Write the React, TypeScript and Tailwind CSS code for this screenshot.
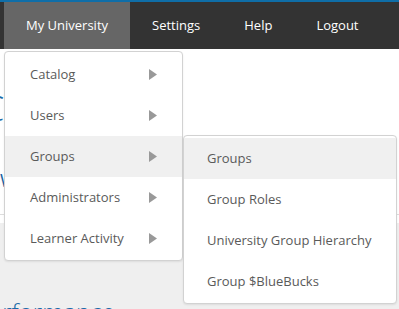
import React from 'react';

const mainItems = ['Catalog', 'Users', 'Groups', 'Administrators', 'Learner Activity'];
const groupItems = ['Groups', 'Group Roles', 'University Group Hierarchy', 'Group $BlueBucks'];
const navItems = ['My University', 'Settings', 'Help', 'Logout'];

const Arrow: React.FC = () => (
  <svg width="8" height="11" viewBox="0 0 8 11" className="shrink-0">
    <polygon points="0,0 8,5.5 0,11" fill="#999999" />
  </svg>
);

export default function App() {
  return (
    <div className="relative h-[309px] w-[399px] overflow-hidden bg-white font-['Open_Sans',sans-serif]">
      {/* top nav */}
      <div className="h-[2px] bg-[#0f6ea8]" />
      <nav className="flex h-[47px] bg-[#333333] pl-[4px]">
        {navItems.map((item, i) => (
          <div
            key={item}
            className={`flex items-center px-[22px] text-[13px] text-white ${i === 0 ? 'bg-[#666666]' : ''}`}
          >
            {item}
          </div>
        ))}
      </nav>

      {/* page behind the menus */}
      <main className="flex flex-col">
        <div className="flex h-[166px] flex-col border-b border-[#dddddd]">
          <div className="-ml-[17px] mt-[42px] text-[34px] font-light leading-none text-[#1a6aa8]">C</div>
          <div className="mt-[46px] whitespace-nowrap text-[18px] leading-none text-[#1a5f9e]">
            Welcome to My University Administration
          </div>
        </div>
        <div className="h-[8px]" />
        <div className="h-[120px] bg-[#efefef] pt-[77px]">
          <div className="-ml-[25px] whitespace-nowrap text-[24px] font-light leading-none text-[#1a6aa8]">Performance</div>
        </div>
      </main>

      {/* first level dropdown */}
      <div className="absolute left-[4px] top-[51px] w-[179px] rounded-[4px] border border-[#d2d2d2] bg-white pt-[2px] pb-[1px] shadow-[0_1px_2px_rgba(0,0,0,0.08)]">
        {mainItems.map((item) => (
          <div
            key={item}
            className={`flex h-[41px] items-center justify-between px-[25px] text-[13px] text-[#5a5a5a] ${item === 'Groups' ? 'bg-[#f0f0f0]' : ''}`}
          >
            <span>{item}</span>
            <Arrow />
          </div>
        ))}
      </div>

      {/* groups submenu */}
      <div className="absolute left-[183px] top-[135px] w-[214px] rounded-[4px] border border-[#d2d2d2] bg-white pt-[2px] pb-[1px] shadow-[0_1px_2px_rgba(0,0,0,0.08)]">
        {groupItems.map((item, i) => (
          <div
            key={item}
            className={`flex h-[41px] items-center pl-[23px] text-[13px] text-[#5a5a5a] ${i === 0 ? 'bg-[#f0f0f0]' : ''}`}
          >
            {item}
          </div>
        ))}
      </div>
    </div>
  );
}
